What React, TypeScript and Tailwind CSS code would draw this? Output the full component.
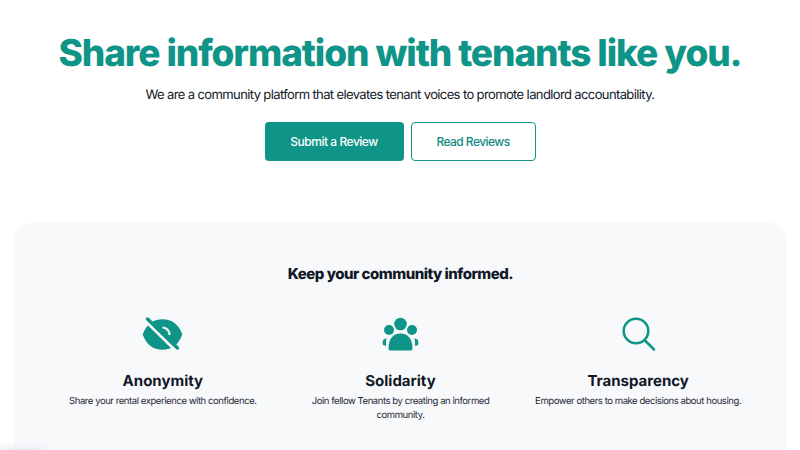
export default function App() {
  const features = [
    {
      title: "Anonymity",
      text: "Share your rental experience with confidence.",
      icon: (
        <svg width="44" height="40" viewBox="0 0 44 40" fill="none">
          <path d="M2.500 20.500C6 11 13 6 21.500 6S37 11 40.500 20.500C37 30 30 35 21.500 35S6 30 2.500 20.500Z" fill="#0f9488" stroke="#0f9488" strokeWidth="1.500" strokeLinejoin="round" />
          <path d="M21.500 13.500a7 7 0 0 1 7 7.500" stroke="#f8f9fb" strokeWidth="2.200" />
          <path d="M3.500 6 34.500 36.500" stroke="#f8f9fb" strokeWidth="3" />
          <path d="M6.500 5 36.500 34" stroke="#0f9488" strokeWidth="3.400" strokeLinecap="round" />
        </svg>
      ),
    },
    {
      title: "Solidarity",
      text: "Join fellow Tenants by creating an informed community.",
      icon: (
        <svg width="40" height="36" viewBox="0 0 40 36" fill="#0f9488">
          <circle cx="20.500" cy="8" r="6.300" />
          <circle cx="9" cy="14" r="5" />
          <circle cx="32" cy="14" r="5" />
          <path d="M8 32c0-9 5-15 12.500-15S33 23 33 32c0 2-1 3-2.500 3h-20C9 35 8 34 8 32Z" stroke="#f8f9fb" strokeWidth="1" />
          <path d="M6.500 22 3.500 23.500c-1 1.500-1 4-.5 5.500L6 30c0-3 0-5 .5-8Z" />
          <path d="M34.500 22l3 1.500c1 1.500 1 4 .5 5.500l-3 1c0-3 0-5-.5-8Z" />
        </svg>
      ),
    },
    {
      title: "Transparency",
      text: "Empower others to make decisions about housing.",
      icon: (
        <svg width="36" height="36" viewBox="0 0 36 36" fill="none" stroke="#0f9488" strokeLinecap="round">
          <circle cx="16" cy="15" r="12.300" strokeWidth="2.500" />
          <path d="M25 24.500 34 33.500" strokeWidth="2.500" />
        </svg>
      ),
    },
  ];

  return (
    <div className="relative w-[800px] h-[450px] overflow-hidden bg-white font-['Inter',sans-serif] [text-rendering:geometricPrecision]">
      <section className="flex flex-col items-center pt-[27px]">
        <h1 className="text-[37px] leading-[52px] font-extrabold tracking-[-1.1px] text-[#0f9488] whitespace-nowrap">
          Share information with tenants like you.
        </h1>
        <p className="mt-[6px] text-[13px] leading-5 tracking-[-0.62px] text-[#111827] whitespace-nowrap">
          We are a community platform that elevates tenant voices to promote landlord accountability.
        </p>
        <div className="mt-[17px] flex gap-[7px]">
          <button className="w-[139px] h-[39px] rounded bg-[#0f9488] text-white text-[12px] tracking-[-0.47px] font-medium">
            Submit a Review
          </button>
          <button className="w-[125px] h-[39px] rounded border border-[#0f9488] bg-white text-[#0f8a80] text-[12px] tracking-[-0.55px] font-medium">
            Read Reviews
          </button>
        </div>
      </section>
      <section className="ml-[14px] mr-[13px] mt-[61px] h-[300px] rounded-t-[20px] bg-[#f8f9fb] pt-[42px]">
        <h2 className="text-center text-[15px] leading-[20px] font-extrabold tracking-[-0.5px] text-[#111827]">
          Keep your community informed.
        </h2>
        <div className="mt-[30px] grid grid-cols-3 gap-[8px] px-[34px]">
          {features.map((f) => (
            <div key={f.title} className="flex flex-col items-center text-center">
              <div className="h-[40px] flex items-center justify-center">{f.icon}</div>
              <h3 className="mt-[17px] text-[15px] leading-[20px] font-bold text-[#111827]">{f.title}</h3>
              <p className="mt-[4px] w-[220px] text-[9.500px] leading-[14px] tracking-[-0.43px] text-[#1f2937]">{f.text}</p>
            </div>
          ))}
        </div>
      </section>
      <div className="absolute left-0 bottom-[-6px] w-[44px] h-[8px] bg-[#e5e7eb] blur-[3px]" />
    </div>
  );
}
